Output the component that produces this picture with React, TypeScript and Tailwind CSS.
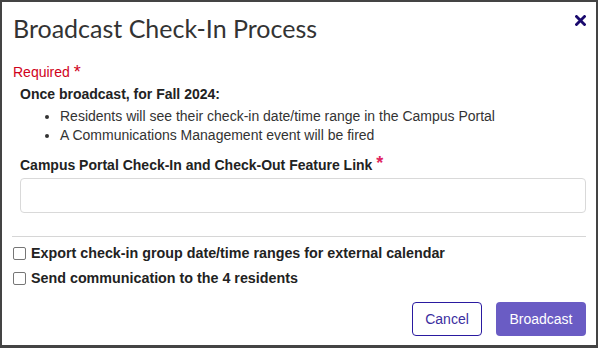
export default function App() {
  return (
    <div className="w-[598px] h-[348px] bg-[#444444] pt-[2px] px-[2px] pb-[3px] font-['Liberation_Sans',Arial,sans-serif]">
      <div className="h-full bg-white flex flex-col">
        {/* Header */}
        <div className="flex items-start justify-between pl-[11px] pr-[10px] pt-[11px]">
          <h1 className="font-['Lato',sans-serif] font-normal text-[25px] leading-[30px] text-[#333333]">
            Broadcast Check-In Process
          </h1>
          <button className="mt-[2px] text-[#1a0a6e]" aria-label="Close">
            <svg width="11" height="11" viewBox="0 0 11 11">
              <path d="M1.5 1.5 L9.5 9.5 M9.5 1.5 L1.5 9.5" stroke="currentColor" strokeWidth="2.8" strokeLinecap="square" />
            </svg>
          </button>
        </div>

        {/* Body */}
        <div className="px-[10px] pt-[20px]">
          <div className="text-[14px] text-[#d0021b] leading-[18px] ml-[1px]">
            Required <span className="text-[18px] align-top">*</span>
          </div>
          <div className="pl-[8px] pt-[3px] text-[#222222] text-[14px]">
            <p className="font-bold leading-[20px]">Once broadcast, for Fall 2024:</p>
            <ul className="list-disc pl-[40px] leading-[19px] text-[#333333] pt-[3px]">
              <li>Residents will see their check-in date/time range in the Campus Portal</li>
              <li>A Communications Management event will be fired</li>
            </ul>
            <label className="block font-bold mt-[10px] leading-[20px]">
              Campus Portal Check-In and Check-Out Feature Link{" "}
              <span className="text-[#e0245e] text-[18px] align-top leading-[16px]">*</span>
            </label>
            <input
              type="text"
              className="mt-[3px] w-[566px] h-[35px] border border-[#d9d9d9] rounded-[4px] px-2 outline-none"
            />
          </div>

          <div className="mt-[23px] border-t border-[#d6d6d6]" />

          <div className="pt-[7px] text-[14.3px] font-bold text-[#222222] flex flex-col gap-[6px]">
            <label className="flex items-center gap-[5px] leading-[19px]">
              <span className="ml-[1px] w-[13px] h-[13px] border border-[#767676] rounded-[2px] bg-white" />
              Export check-in group date/time ranges for external calendar
            </label>
            <label className="flex items-center gap-[5px] leading-[19px]">
              <span className="ml-[1px] w-[13px] h-[13px] border border-[#767676] rounded-[2px] bg-white" />
              Send communication to the 4 residents
            </label>
          </div>
        </div>

        {/* Footer */}
        <div className="mt-auto flex justify-end gap-[14px] pr-[10px] pb-[9px]">
          <button className="w-[70px] h-[34px] border border-[#2a1aa0] rounded-[4px] text-[14px] text-[#3b2ea0] bg-white">
            Cancel
          </button>
          <button className="w-[90px] h-[34px] rounded-[4px] text-[14px] text-white bg-[#6a5cc4]">
            Broadcast
          </button>
        </div>
      </div>
    </div>
  );
}
